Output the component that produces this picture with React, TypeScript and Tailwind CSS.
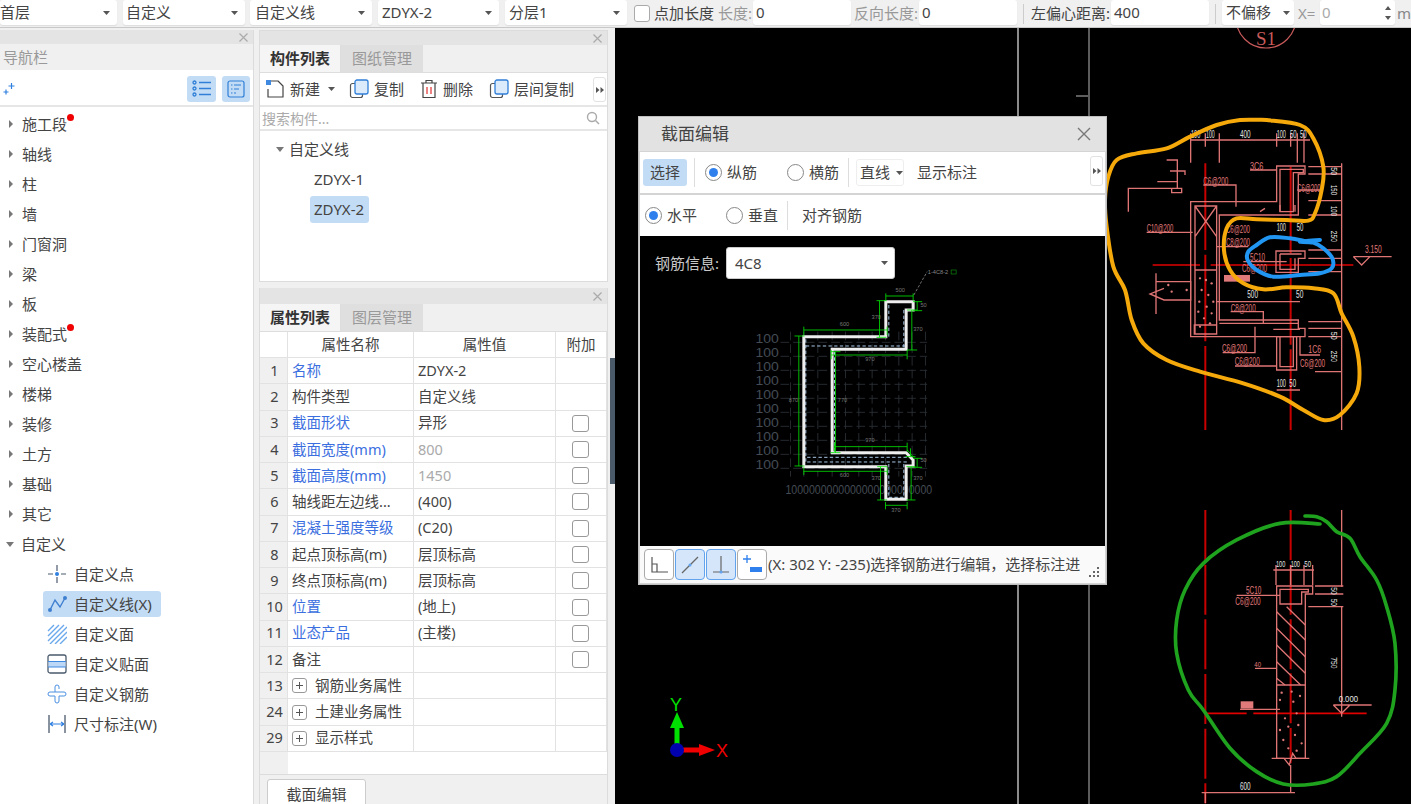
import type { ReactNode } from "react";

// smooth path through hand-traced points, for the marker scribbles
function smooth(pts: number[][]) {
  let d = `M${pts[0][0]} ${pts[0][1]}`;
  for (let i = 0; i < pts.length - 1; i++) {
    const p0 = pts[Math.max(i - 1, 0)];
    const p1 = pts[i];
    const p2 = pts[i + 1];
    const p3 = pts[Math.min(i + 2, pts.length - 1)];
    d += ` C${p1[0] + (p2[0] - p0[0]) / 6} ${p1[1] + (p2[1] - p0[1]) / 6} ${p2[0] - (p3[0] - p1[0]) / 6} ${p2[1] - (p3[1] - p1[1]) / 6} ${p2[0]} ${p2[1]}`;
  }
  return d;
}

const orange = [[500,30],[600,45],[640,85],[670,170],[665,240],[645,310],[625,332],[560,330],[470,328],[410,325],[380,355],[372,420],[390,480],[430,520],[490,538],[560,532],[640,535],[700,550],[725,610],[760,680],[778,770],[770,850],[720,915],[670,930],[610,900],[540,860],[430,820],[300,785],[200,750],[130,700],[95,630],[75,540],[40,470],[20,350],[15,270],[25,200],[50,150],[110,130],[200,115],[270,80],[350,45],[420,30],[500,30]];
const blue = [[660,390],[600,395],[640,398],[670,415],[697,445],[695,475],[660,490],[600,495],[520,500],[470,480],[443,450],[445,425],[470,405],[510,382],[570,385],[610,392]];
const green = [[435,18],[470,20],[500,35],[530,65],[570,85],[600,140],[650,210],[680,290],[705,400],[705,540],[680,640],[600,730],[530,800],[460,822],[370,822],[290,785],[210,715],[130,600],[85,540],[50,430],[50,330],[75,240],[130,160],[230,90],[360,40],[480,42]];

const dots = [[300,505],[318,510],[335,520],[305,540],[325,555],[298,575],[320,590],[340,575],[295,605],[312,625],[335,610],[330,640],[300,650],[205,525],[215,545],[260,540]];
const dots2 = [[365,548],[395,545],[420,558],[360,570],[400,575],[375,625],[410,610],[385,650],[360,660],[415,645],[405,675],[370,690],[425,700],[385,715],[410,722]];

// narrow CAD lettering: fixed width, tall glyphs
function T({ x, y, w, s = 32, c, rot, children }: { x: number; y: number; w: number; s?: number; c?: string; rot?: boolean; children: string }) {
  return (
    <text
      x={x}
      y={y}
      fontSize={s}
      fill={c ?? "#e07a7a"}
      textLength={w}
      lengthAdjust="spacingAndGlyphs"
      transform={rot ? `rotate(90 ${x} ${y})` : undefined}
    >
      {children}
    </text>
  );
}

function Cad() {
  return (
    <svg className="absolute inset-0 w-full h-full" viewBox="615 28 796 776" fontFamily="'Liberation Sans', sans-serif">
      <path d="M1018 28V804" stroke="#e8e8e8" strokeWidth="1.2" />
      <path d="M1089 28V804" stroke="#9a9a9a" strokeWidth="1.2" />
      <path d="M1076 96H1088" stroke="#bbb" />
      <circle cx="1266" cy="18" r="30" fill="none" stroke="#c85a5a" strokeWidth="1.2" />
      <text x="1266" y="45" fill="#c85a5a" fontSize="19" textAnchor="middle" fontFamily="'Liberation Serif', serif">S1</text>

      {/* upper section */}
      <g transform="translate(1100 110) scale(0.3333)" fill="none">
        <path d="M316 160V960M572 170V960" stroke="#c80000" strokeWidth="6" strokeDasharray="260 14" />
        <path d="M158 465H300M332 465H760" stroke="#e00000" strokeWidth="4" />
        <g stroke="#de7474" strokeWidth="4">
          <path d="M725 160V960M270 90H630M272 70V158M316 70V110M358 70V158M530 70V110M572 70V110M592 70V158M612 70V158" />
          <path d="M530 168H615V192H595V315H358V630H595V655H615V680H272V275H530Z" />
          <path d="M285 288H350V672H285ZM285 480H350M285 288L350 380M350 288L285 380M540 178H610V188H580V305H540ZM283 645H350V672H283Z" />
          <path d="M530 680H590V780H530ZM540 680V770H580V680M520 658H600M358 640H595" />
          <path d="M528 423H615V445H595V487H528ZM540 432H605M540 432V478H585V445M430 455H560" />
          <path d="M200 150H232V235H245V248H215V235H232M172 215H232M210 183H255V195M85 305V235H215M480 305L495 295M540 285V305M585 285V305" />
          <path d="M310 225H408V290M140 367H278M168 490V612M168 515H272V570H192L150 552L192 535M350 410H445M350 575H600M392 605H490V640M465 650V728H368M405 768H530M450 180H530M645 785H725M625 170H725M625 192H725M625 272H725M625 315H725M625 420H725M625 445H725M625 485H725M625 635H725M625 655H725M625 680H725M530 840H600M600 680V735H660M592 240H660" />
          <path d="M760 440H875M760 440L785 465L810 440" />
        </g>
        <T x={450} y={181} w={40}>3C6</T>
        <T x={310} y={224} w={75}>C6@200</T>
        <T x={592} y={245} w={70}>C6@200</T>
        <T x={140} y={365} w={80}>C10@200</T>
        <T x={378} y={368} w={72}>C6@200</T>
        <T x={378} y={407} w={72}>C8@200</T>
        <T x={450} y={452} w={45}>5C10</T>
        <T x={426} y={486} w={75}>C6@200</T>
        <T x={392} y={606} w={75}>C8@200</T>
        <T x={366} y={726} w={75}>C6@200</T>
        <T x={404} y={764} w={75}>C6@200</T>
        <T x={625} y={730} w={38}>1C6</T>
        <T x={600} y={770} w={75}>C6@200</T>
        <T x={795} y={430} w={50}>3.150</T>
        <T x={273} y={84} w={28} c="#e4e4e4">100</T>
        <T x={318} y={84} w={26} c="#e4e4e4">100</T>
        <T x={420} y={84} w={32} c="#e4e4e4">400</T>
        <T x={530} y={84} w={28} c="#e4e4e4">100</T>
        <T x={570} y={84} w={20} c="#e4e4e4">50</T>
        <T x={600} y={84} w={20} c="#e4e4e4">50</T>
        <T x={530} y={364} w={28} c="#e4e4e4">100</T>
        <T x={590} y={364} w={20} c="#e4e4e4">50</T>
        <T x={442} y={564} w={32} c="#e4e4e4">500</T>
        <T x={588} y={564} w={22} c="#e4e4e4">50</T>
        <T x={530} y={832} w={28} c="#e4e4e4">100</T>
        <T x={568} y={832} w={20} c="#e4e4e4">50</T>
        <T x={694} y={172} w={24} s={28} c="#e4e4e4" rot>50</T>
        <T x={694} y={225} w={30} s={28} c="#e4e4e4" rot>150</T>
        <T x={694} y={288} w={30} s={28} c="#e4e4e4" rot>100</T>
        <T x={694} y={362} w={34} s={28} c="#e4e4e4" rot>250</T>
        <T x={694} y={665} w={24} s={28} c="#e4e4e4" rot>50</T>
        <T x={694} y={722} w={34} s={28} c="#e4e4e4" rot>250</T>
        <rect x="372" y="495" width="78" height="20" fill="#e07a7a" />
        {dots.map(([x, y]) => <circle key={`${x}-${y}`} cx={x} cy={y} r="3.5" fill="#e07a7a" />)}
      </g>

      {/* lower section */}
      <g transform="translate(1160 510) scale(0.3333)" fill="none">
        <path d="M136 0V880M392 0V480M392 490V760" stroke="#c80000" strokeWidth="6" strokeDasharray="150 14" />
        <path d="M136 610H260M280 610H620" stroke="#e00000" strokeWidth="5" />
        <g stroke="#de7474" strokeWidth="4">
          <path d="M545 0V230M545 290V620M340 180H462M348 165V225M392 165V225M432 165V225M458 165V225M136 848V880" />
          <path d="M350 228H458V252H436V745H350ZM360 238H445V246H425V282H360ZM350 525H436" />
          <path d="M350 305L436 390M380 290L436 345M350 355L436 440M350 405L436 490M350 455L422 525M350 505L375 525" />
          <path d="M465 228H550M465 252H550M445 290H550M230 256H360M285 475H350M240 598H360M520 585H635M520 585L545 610L570 585" />
          <path d="M335 745H372L388 765L398 730L408 745H448M392 765V850M125 848H405" />
        </g>
        <T x={258} y={252} w={46}>5C10</T>
        <T x={226} y={286} w={76}>C6@200</T>
        <T x={283} y={472} w={20} s={24}>40</T>
        <rect x="242" y="574" width="38" height="22" fill="#e07a7a" />
        <T x={536} y={576} w={58} s={28} c="#e4e4e4">0.000</T>
        <T x={348} y={172} w={28} s={28} c="#e4e4e4">100</T>
        <T x={392} y={172} w={28} s={28} c="#e4e4e4">100</T>
        <T x={433} y={172} w={20} s={28} c="#e4e4e4">50</T>
        <T x={240} y={840} w={32} c="#e4e4e4">600</T>
        <T x={513} y={232} w={22} s={26} c="#e4e4e4" rot>50</T>
        <T x={513} y={266} w={22} s={26} c="#e4e4e4" rot>50</T>
        <T x={513} y={442} w={34} s={26} c="#e4e4e4" rot>750</T>
        {dots2.map(([x, y]) => <circle key={`${x}-${y}`} cx={x} cy={y} r="3.5" fill="#e07a7a" />)}
      </g>

      {/* marker scribbles */}
      <g transform="translate(1100 110) scale(0.3333)" fill="none" strokeLinecap="round" strokeLinejoin="round">
        <path d={smooth(orange)} stroke="#f5a90a" strokeWidth="12" />
        <path d={smooth(blue)} stroke="#2196f3" strokeWidth="12" />
      </g>
      <g transform="translate(1160 510) scale(0.3333)" fill="none" strokeLinecap="round" strokeLinejoin="round">
        <path d={smooth(green)} stroke="#1fa31f" strokeWidth="11" />
      </g>

      {/* axis marker */}
      <path d="M677 749V722" stroke="#00e000" strokeWidth="5" />
      <path d="M677 712L684 728H670Z" fill="#00e000" />
      <path d="M677 750H702" stroke="#f00000" strokeWidth="5" />
      <path d="M715 750L699 744V756Z" fill="#f00000" />
      <circle cx="677" cy="750" r="7" fill="#0000b0" />
      <text x="676" y="711" fill="#00e000" fontSize="18" textAnchor="middle">Y</text>
      <text x="722" y="757" fill="#f00000" fontSize="18" textAnchor="middle">X</text>
    </svg>
  );
}

function SectionDrawing() {
  const labels = [235, 277, 319, 361, 403, 445, 487, 529, 571, 613];
  const verts = [150, 190, 232, 275, 315, 355, 395, 435, 475, 515, 555];
  return (
    <svg className="w-full h-full" viewBox="640 236 464 310" fontFamily="'Liberation Sans', sans-serif">
      <g transform="translate(740 260) scale(0.3333)" fill="none">
        <g stroke="#2c3238" strokeWidth="2.5" strokeDasharray="26 12">
          {labels.map((y) => <path key={y} d={`M120 ${y + 12}H560`} />)}
          {verts.map((x) => <path key={x} d={`M${x} 215V650`} />)}
        </g>
        <g fill="#434b54" fontSize="36">
          {labels.map((y) => <text key={y} x="45" y={y + 14} textLength="70" lengthAdjust="spacingAndGlyphs">100</text>)}
          <text x="135" y="702" textLength="440" lengthAdjust="spacingAndGlyphs">1000000000000000000000000</text>
        </g>
        <path d="M196 258H495M445 135V232M490 150V262M196 238V610M282 275V578M200 592H515M200 606H500M445 612V712M490 612V712M445 712H490" stroke="#a8c8e8" strokeWidth="3" strokeDasharray="10 7" />
        <path d="M190 230H436V125H518V150H497V268H275V578H497L518 600V618H497V718H436V620H190Z" stroke="#eeeeee" strokeWidth="9" strokeLinejoin="miter" />
        <path d="M520 105L560 35" stroke="#888" strokeWidth="2.5" strokeDasharray="8 5" />
        <text x="562" y="42" fill="#888" fontSize="17">1-4C8-2</text>
        <rect x="632" y="30" width="15" height="12" fill="none" stroke="#0c8a0c" strokeWidth="2" />
        <g stroke="#00e000" strokeWidth="2.5">
          <path d="M190 210H440M190 200V225M440 200V225" />
          <path d="M175 228V618M162 228H192M162 618H192" />
          <path d="M436 108H518M436 100V122M518 100V122" />
          <path d="M417 122V232M408 122H438M408 232H438" />
          <path d="M514 150V270M500 150H530M500 270H530" />
          <path d="M530 125V152M518 125H545M518 152H545" />
          <path d="M272 285H500M272 270V298M500 270V298" />
          <path d="M285 275V578M270 275H300M270 578H300" />
          <path d="M282 560H500M282 548V575M500 548V575" />
          <path d="M190 634H440M190 622V645M440 622V645" />
          <path d="M420 620V720M410 620H440M410 720H440" />
          <path d="M512 620V720M498 620H525M498 720H525" />
          <path d="M435 736H500M435 726V748M500 726V748" />
          <path d="M530 595V622M518 595H545M518 622H545" />
          <path d="M500 570L520 592M510 565V590M495 590H525" />
        </g>
        <g fill="#777" fontSize="17">
          <text x="465" y="97">500</text>
          <text x="298" y="197">600</text>
          <text x="393" y="178">370</text>
          <text x="518" y="212">370</text>
          <text x="540" y="140">50</text>
          <text x="374" y="302">970</text>
          <text x="292" y="426">770</text>
          <text x="145" y="426">870</text>
          <text x="374" y="546">970</text>
          <text x="298" y="650">600</text>
          <text x="393" y="660">370</text>
          <text x="518" y="660">370</text>
          <text x="452" y="756">370</text>
          <text x="540" y="606">50</text>
        </g>
      </g>
    </svg>
  );
}

function Caret() {
  return (
    <svg width="7" height="4" viewBox="0 0 7 4" className="shrink-0">
      <path d="M0 0H7L3.5 4Z" fill="#555" />
    </svg>
  );
}

function Arrow({ open }: { open?: boolean }) {
  return (
    <svg width="8" height="10" viewBox="0 0 8 10" className="shrink-0">
      {open ? <path d="M0 3H8L4 8Z" fill="#777" /> : <path d="M2 1L6 5L2 9Z" fill="#777" />}
    </svg>
  );
}

function More() {
  return (
    <svg width="8" height="6" viewBox="0 0 8 6">
      <path d="M0 0L3.5 3L0 6ZM4.5 0L8 3L4.5 6Z" fill="#555" />
    </svg>
  );
}

function TopSelect({ label, width }: { label: string; width: string }) {
  return (
    <div className={`${width} h-[25px] -mt-[2px] bg-white rounded-[3px] shadow-[0_1px_1px_#ddd] flex items-center justify-between pr-[7px] shrink-0`}>
      <span>{label}</span>
      <Caret />
    </div>
  );
}

function TopInput({ value, muted }: { value: string; muted?: boolean }) {
  return (
    <div className={`w-[98px] h-[25px] -mt-[2px] bg-white rounded-[3px] shadow-[0_1px_1px_#ddd] flex items-center px-[3px] shrink-0 ${muted ? "text-[#aaa]" : ""}`}>
      {value}
    </div>
  );
}

function TopBar() {
  return (
    <div className="h-[28px] bg-[#f0f0f0] border-b border-[#c8c8c8] flex items-center text-[15px] text-[#444] whitespace-nowrap shrink-0">
      <TopSelect label="首层" width="w-[117px]" />
      <div className="w-[6px] shrink-0" />
      <TopSelect label="自定义" width="w-[122px] pl-[3px]" />
      <div className="w-[5px] shrink-0" />
      <TopSelect label="自定义线" width="w-[122px] pl-[5px]" />
      <div className="w-[6px] shrink-0" />
      <TopSelect label="ZDYX-2" width="w-[121px] pl-[4px]" />
      <div className="w-[6px] shrink-0" />
      <TopSelect label="分层1" width="w-[122px] pl-[4px]" />
      <div className="w-[7px] shrink-0" />
      <div className="w-[16px] h-[17px] bg-white border border-[#aaa] rounded-[3px] shrink-0" />
      <span className="ml-[4px] w-[61px]">点加长度</span>
      <span className="ml-[3px] text-[#999] w-[35px]">长度:</span>
      <TopInput value="0" />
      <span className="ml-[3px] text-[#999] w-[65px]">反向长度:</span>
      <TopInput value="0" />
      <div className="w-px h-[20px] bg-[#ccc] ml-[6px] shrink-0" />
      <span className="ml-[7px] w-[80px]">左偏心距离:</span>
      <TopInput value="400" />
      <div className="w-px h-[20px] bg-[#ccc] ml-[6px] shrink-0" />
      <div className="ml-[6px] w-[72px] h-[25px] -mt-[2px] bg-white rounded-[3px] shadow-[0_1px_1px_#ddd] flex items-center justify-between px-[4px] shrink-0">
        <span>不偏移</span>
        <Caret />
      </div>
      <span className="ml-[4px] text-[#999] w-[22px]">X=</span>
      <div className="w-[75px] h-[25px] -mt-[2px] bg-white rounded-[3px] shadow-[0_1px_1px_#ddd] flex items-center justify-between pl-[2px] pr-[4px] text-[#aaa] shrink-0">
        <span>0</span>
        <svg width="6" height="16" viewBox="0 0 6 16"><path d="M3 1L6 5H0ZM3 15L0 11H6Z" fill="#555" /></svg>
      </div>
      <span className="ml-[2px] text-[#888]">m</span>
    </div>
  );
}

function PanelClose({ tall }: { tall?: boolean }) {
  return (
    <div className={`${tall ? "h-[16px]" : "h-[14px]"} bg-[#e4e4e4] flex items-center justify-end pr-[5px] shrink-0`}>
      <svg width="9" height="9" viewBox="0 0 9 9"><path d="M0.5 0.5L8.5 8.5M8.5 0.5L0.5 8.5" stroke="#aaa" strokeWidth="1.2" /></svg>
    </div>
  );
}

const navItems = ["施工段", "轴线", "柱", "墙", "门窗洞", "梁", "板", "装配式", "空心楼盖", "楼梯", "装修", "土方", "基础", "其它"];
const dotted = ["施工段", "装配式"];

const customIcons: Record<string, ReactNode> = {
  point: (
    <g fill="none">
      <path d="M10 1V7M10 13V19M1 10H6M14 10H19" stroke="#4b5a6e" strokeWidth="1.2" />
      <circle cx="10" cy="10" r="2" fill="#2f80e0" />
    </g>
  ),
  line: (
    <g fill="none">
      <path d="M3 16L8 6L13 13L18 4" stroke="#3f7fd0" strokeWidth="1.4" />
      <circle cx="3" cy="16" r="2" fill="#3f7fd0" />
      <circle cx="18" cy="4" r="2" fill="#3f7fd0" />
    </g>
  ),
  face: <path d="M1 7L7 1M1 12L12 1M1 17L17 1M3 20L20 3M8 20L20 8M13 20L20 13" stroke="#6aa8ec" strokeWidth="1.4" fill="none" />,
  stick: (
    <g fill="none">
      <rect x="1" y="1" width="18" height="18" rx="2" stroke="#4b5a6e" strokeWidth="1.3" />
      <rect x="1.5" y="8" width="17" height="5" fill="#bcd8f6" />
      <path d="M1 7.5H19M1 13H19" stroke="#3f8ae0" strokeWidth="1.1" />
    </g>
  ),
  rebar: <path d="M8 8V3A2 2 0 0 1 12 3V5M8 8H3A2 2 0 0 0 3 12H8V17A2 2 0 0 0 12 17V12H17A2 2 0 0 0 17 8H8" stroke="#4a90e2" strokeWidth="1" fill="none" />,
  dim: (
    <g fill="none">
      <path d="M2 1V19M18 1V19" stroke="#4b5a6e" strokeWidth="1.3" />
      <path d="M3 10H17M3 10L6 8M3 10L6 12M17 10L14 8M17 10L14 12" stroke="#2f80e0" strokeWidth="1.2" />
    </g>
  ),
};

const customs = [
  { label: "自定义点", icon: "point" },
  { label: "自定义线(X)", icon: "line", active: true },
  { label: "自定义面", icon: "face" },
  { label: "自定义贴面", icon: "stick" },
  { label: "自定义钢筋", icon: "rebar" },
  { label: "尺寸标注(W)", icon: "dim" },
];

function NavPanel() {
  return (
    <div className="w-[254px] shrink-0 flex flex-col bg-white border-r border-[#dcdcdc] mt-[2px]">
      <PanelClose />
      <div className="h-[26px] bg-[#f0f0f0] flex items-center pl-[3px] text-[15px] text-[#999] shrink-0">导航栏</div>
      <div className="h-[35px] mt-[2px] border-b-2 border-[#e6e6e6] flex items-center justify-between pl-[3px] pr-[3px] shrink-0">
        <svg width="12" height="13" viewBox="0 0 12 13"><path d="M8.5 1V7M5.5 4H11.5M3 7.5V12.5M0.5 10H5.5" stroke="#2f80e0" strokeWidth="1.2" /></svg>
        <div className="flex gap-[6px]">
          <div className="w-[29px] h-[26px] bg-[#c3dcf5] rounded-[3px] flex items-center justify-center">
            <svg width="20" height="17" viewBox="0 0 20 17" fill="none" stroke="#2f7fd8" strokeWidth="1.3"><circle cx="2.5" cy="2.5" r="1.5" /><circle cx="2.5" cy="8.5" r="1.5" /><circle cx="2.5" cy="14.5" r="1.5" /><path d="M7 2.5H19M7 8.5H19M7 14.5H19" /></svg>
          </div>
          <div className="w-[28px] h-[26px] bg-[#c3dcf5] rounded-[3px] flex items-center justify-center">
            <svg width="18" height="18" viewBox="0 0 18 18" fill="none" stroke="#2f7fd8" strokeWidth="1.2"><rect x="1" y="1" width="16" height="16" rx="2" /><path d="M4 5H5.5M7 5H14M4 9H5.5M7 9H12M4 13H5.5M7 13H9" /></svg>
          </div>
        </div>
      </div>
      <div className="pt-[2px] text-[15px] text-[#444]">
        {navItems.map((n) => (
          <div key={n} className="h-[30px] flex items-center pl-[7px] gap-[7px]">
            <Arrow />
            <span className="relative">
              {n}
              {dotted.includes(n) && <span className="absolute -right-[7px] top-[1px] w-[7px] h-[7px] rounded-full bg-[#f00000]" />}
            </span>
          </div>
        ))}
        <div className="h-[30px] flex items-center pl-[6px] gap-[7px]">
          <Arrow open />
          <span>自定义</span>
        </div>
        {customs.map((c) => (
          <div key={c.label} className="h-[30px] flex items-center pl-[43px]">
            <div className={`flex items-center h-[26px] pl-[4px] pr-[9px] gap-[7px] rounded-[3px] ${c.active ? "bg-[#c3dcf5]" : ""}`}>
              <svg width="20" height="20" viewBox="0 0 20 20" className="shrink-0">{customIcons[c.icon]}</svg>
              <span>{c.label}</span>
            </div>
          </div>
        ))}
      </div>
    </div>
  );
}

function Tabs({ active, other }: { active: string; other: string }) {
  return (
    <div className="h-[28px] bg-[#f0f0f0] flex text-[15px] border-b border-[#ddd] shrink-0">
      <div className="w-[81px] flex items-center justify-center font-bold text-[#333] bg-[#f5f5f5] border-r border-[#ddd]">{active}</div>
      <div className="w-[82px] flex items-center justify-center text-[#999] bg-[#dfdfdf]">{other}</div>
    </div>
  );
}

function Tool({ icon, label, className }: { icon: ReactNode; label: string; className?: string }) {
  return (
    <div className={`flex items-center gap-[5px] ${className ?? ""}`}>
      {icon}
      <span>{label}</span>
    </div>
  );
}

const copyIcon = (
  <svg width="20" height="20" viewBox="0 0 20 20" fill="none">
    <rect x="1.5" y="4.5" width="12" height="14" rx="2" stroke="#555" strokeWidth="1.2" />
    <rect x="6" y="1" width="13" height="14" rx="2" fill="#dcebfb" stroke="#2f7fd8" strokeWidth="1.3" />
  </svg>
);

function ListPanel() {
  return (
    <div className="h-[252px] flex flex-col bg-white border border-[#dcdcdc] shrink-0">
      <PanelClose />
      <Tabs active="构件列表" other="图纸管理" />
      <div className="h-[34px] flex items-center text-[15px] text-[#444] border-b-2 border-[#e6e6e6] pl-[5px] shrink-0 relative whitespace-nowrap">
        <Tool
          label="新建"
          icon={
            <svg width="20" height="20" viewBox="0 0 20 20" fill="none">
              <path d="M5 2H13L18 7V18H3V10" stroke="#444" strokeWidth="1.2" strokeLinejoin="round" />
              <rect x="1" y="1" width="5" height="5" fill="#3f8ae0" />
            </svg>
          }
        />
        <span className="ml-[8px]"><Caret /></span>
        <Tool className="ml-[14px]" label="复制" icon={copyIcon} />
        <Tool
          className="ml-[16px]"
          label="删除"
          icon={
            <svg width="18" height="20" viewBox="0 0 18 20" fill="none" stroke="#444" strokeWidth="1.2">
              <path d="M1 4H17M6 4V1.5H12V4M3 4V18.5H15V4" />
              <path d="M7 8V15M11 8V15" stroke="#e03030" />
            </svg>
          }
        />
        <Tool className="ml-[16px]" label="层间复制" icon={copyIcon} />
        <div className="absolute right-[1px] top-[4px] w-[13px] h-[25px] bg-white border border-[#e2e2e2] rounded-[3px] flex items-center justify-center">
          <More />
        </div>
      </div>
      <div className="h-[24px] flex items-center justify-between pl-[2px] pr-[7px] text-[14px] text-[#aaa] border-b-2 border-[#e6e6e6] shrink-0">
        <span>搜索构件...</span>
        <svg width="14" height="14" viewBox="0 0 14 14" fill="none" stroke="#aaa" strokeWidth="1.4"><circle cx="6" cy="6" r="4.5" /><path d="M9.5 9.5L13 13" /></svg>
      </div>
      <div className="text-[15px] text-[#444] pt-[3px]">
        <div className="h-[30px] flex items-center pl-[16px] gap-[5px]">
          <Arrow open />
          <span>自定义线</span>
        </div>
        <div className="h-[30px] flex items-center pl-[54px]">ZDYX-1</div>
        <div className="h-[30px] flex items-center pl-[50px]">
          <span className="bg-[#c3dcf5] rounded-[3px] pl-[4px] pr-[5px] h-[27px] flex items-center">ZDYX-2</span>
        </div>
      </div>
    </div>
  );
}

type Row = { no: number; name: string; value?: string; blue?: boolean; gray?: boolean; check?: boolean; group?: boolean };

const rows: Row[] = [
  { no: 1, name: "名称", value: "ZDYX-2", blue: true },
  { no: 2, name: "构件类型", value: "自定义线" },
  { no: 3, name: "截面形状", value: "异形", blue: true, check: true },
  { no: 4, name: "截面宽度(mm)", value: "800", blue: true, gray: true, check: true },
  { no: 5, name: "截面高度(mm)", value: "1450", blue: true, gray: true, check: true },
  { no: 6, name: "轴线距左边线...", value: "(400)", check: true },
  { no: 7, name: "混凝土强度等级", value: "(C20)", blue: true, check: true },
  { no: 8, name: "起点顶标高(m)", value: "层顶标高", check: true },
  { no: 9, name: "终点顶标高(m)", value: "层顶标高", check: true },
  { no: 10, name: "位置", value: "(地上)", blue: true, check: true },
  { no: 11, name: "业态产品", value: "(主楼)", blue: true, check: true },
  { no: 12, name: "备注", check: true },
  { no: 13, name: "钢筋业务属性", group: true },
  { no: 24, name: "土建业务属性", group: true },
  { no: 29, name: "显示样式", group: true },
];

function PropRow({ row }: { row: Row }) {
  return (
    <div className="h-[26.27px] flex border-b border-[#e2e2e2]">
      <div className="w-[28px] shrink-0 bg-[#f0f0f0] border-r border-[#e2e2e2] flex items-center justify-center pl-[2px]">{row.no}</div>
      <div className={`w-[126px] shrink-0 border-r border-[#e2e2e2] flex items-center pl-[4px] whitespace-nowrap ${row.blue ? "text-[#3b6fe0]" : ""}`}>
        {row.group && (
          <span className="w-[15px] h-[15px] border border-[#999] rounded-[3px] flex items-center justify-center mr-[8px] shrink-0">
            <svg width="7" height="7" viewBox="0 0 7 7"><path d="M3.5 0V7M0 3.5H7" stroke="#555" /></svg>
          </span>
        )}
        {row.name}
      </div>
      <div className={`w-[142px] shrink-0 border-r border-[#e2e2e2] flex items-center pl-[4px] ${row.gray ? "text-[#aaa]" : ""}`}>{row.value}</div>
      <div className="flex-1 border-r border-[#e2e2e2] flex items-center justify-center pr-[1px]">
        {row.check && <span className="w-[17px] h-[17px] bg-white border border-[#999] rounded-[3px]" />}
      </div>
    </div>
  );
}

function PropPanel() {
  return (
    <div className="flex-1 flex flex-col bg-white border-x border-[#dcdcdc] mt-[6px] min-h-0">
      <PanelClose tall />
      <Tabs active="属性列表" other="图层管理" />
      <div className="h-[26px] flex border-b border-[#e2e2e2] text-[14.5px] text-[#444] shrink-0">
        <div className="w-[28px] border-r border-[#e2e2e2]" />
        <div className="w-[126px] border-r border-[#e2e2e2] flex items-center justify-center">属性名称</div>
        <div className="w-[142px] border-r border-[#e2e2e2] flex items-center justify-center">属性值</div>
        <div className="flex-1 border-r border-[#e2e2e2] flex items-center justify-center">附加</div>
      </div>
      <div className="text-[14.5px] text-[#444]">
        {rows.map((r) => <PropRow key={r.no} row={r} />)}
      </div>
      <div className="h-[23px] border-b border-[#dcdcdc] shrink-0">
        <div className="w-[28px] h-full bg-[#f0f0f0]" />
      </div>
      <div className="flex-1 bg-[#f0f0f0] pl-[7px] pt-[4px] overflow-hidden">
        <div className="w-[99px] h-[30px] bg-white border border-[#ccc] rounded-[3px] flex items-center justify-center text-[15px] text-[#444]">截面编辑</div>
      </div>
    </div>
  );
}

function Radio({ on, label, className }: { on?: boolean; label: string; className?: string }) {
  return (
    <div className={`flex items-center gap-[5px] ${className ?? ""}`}>
      <span className="w-[17px] h-[17px] rounded-full border border-[#888] bg-white flex items-center justify-center shrink-0">
        {on && <span className="w-[9px] h-[9px] rounded-full bg-[#2f80ed]" />}
      </span>
      <span>{label}</span>
    </div>
  );
}

function SnapButton({ active, children }: { active?: boolean; children: ReactNode }) {
  return (
    <div className={`w-[30px] h-[31px] rounded-[4px] border flex items-center justify-center shrink-0 ${active ? "bg-[#d5e6fa] border-[#62a3ee]" : "bg-white border-[#aaa]"}`}>
      <svg width="22" height="22" viewBox="0 0 22 22" fill="none">{children}</svg>
    </div>
  );
}

function SectionDialog() {
  return (
    <div className="absolute left-[23px] top-[88px] w-[469px] h-[469px] bg-[#d4d4d4] border border-[#c0c0c0] flex flex-col text-[15px] text-[#444] whitespace-nowrap">
      <div className="h-[34px] bg-[#e2e2e2] flex items-center justify-between pl-[22px] pr-[15px] shrink-0 text-[17px]">
        <span>截面编辑</span>
        <svg width="14" height="14" viewBox="0 0 14 14"><path d="M1 1L13 13M13 1L1 13" stroke="#777" strokeWidth="1.4" /></svg>
      </div>
      <div className="h-[41px] mx-[1px] mt-px bg-white flex items-center relative shrink-0">
        <div className="ml-[3px] w-[44px] h-[27px] bg-[#c3dcf5] rounded-[3px] flex items-center justify-center">选择</div>
        <div className="w-px h-[29px] bg-[#ddd] ml-[7px]" />
        <Radio on label="纵筋" className="ml-[10px]" />
        <Radio label="横筋" className="ml-[30px]" />
        <div className="w-px h-[29px] bg-[#ddd] ml-[9px]" />
        <div className="ml-[7px] h-[27px] w-[48px] border border-[#eee] rounded-[3px] flex items-center gap-[6px] pl-[3px]">
          <span>直线</span>
          <Caret />
        </div>
        <span className="ml-[13px]">显示标注</span>
        <div className="absolute right-[2px] top-[4px] w-[13px] h-[30px] bg-white border border-[#e2e2e2] rounded-[3px] flex items-center justify-center">
          <More />
        </div>
      </div>
      <div className="h-[41px] mx-[1px] mt-[2px] bg-white flex items-center shrink-0">
        <Radio on label="水平" className="ml-[5px]" />
        <Radio label="垂直" className="ml-[29px]" />
        <div className="w-px h-[29px] bg-[#ddd] ml-[9px]" />
        <span className="ml-[14px]">对齐钢筋</span>
      </div>
      <div className="flex-1 mx-[1px] bg-black relative min-h-0">
        <SectionDrawing />
        <div className="absolute left-[15px] top-[11px] flex items-center text-[#c8c8c8]">
          <span className="w-[71px]">钢筋信息:</span>
          <div className="w-[169px] h-[32px] bg-white border border-[#ccc] rounded-[3px] flex items-center justify-between pl-[8px] pr-[6px] text-[#444]">
            <span>4C8</span>
            <Caret />
          </div>
        </div>
      </div>
      <div className="h-[37px] mx-[1px] mb-[1px] bg-[#fafafa] flex items-center pl-[4px] relative shrink-0">
        <SnapButton>
          <path d="M4 3V18H20M4 10H9V18" stroke="#555" strokeWidth="1.2" />
        </SnapButton>
        <div className="w-px" />
        <SnapButton active>
          <path d="M3 19L19 3" stroke="#666" strokeWidth="1.2" />
          <circle cx="11" cy="11" r="1.5" fill="#62a3ee" />
        </SnapButton>
        <div className="w-px" />
        <SnapButton active>
          <path d="M11 2V18M3 18H19" stroke="#666" strokeWidth="1.2" />
          <circle cx="11" cy="18" r="1.6" fill="#62a3ee" />
        </SnapButton>
        <div className="w-px" />
        <SnapButton>
          <path d="M6 1V9M2 5H10" stroke="#2f80ed" strokeWidth="1.3" />
          <rect x="9" y="13" width="12" height="5" fill="#2f80ed" />
        </SnapButton>
        <span className="ml-px w-[312px] overflow-hidden">(X: 302 Y: -235)选择钢筋进行编辑，选择标注进</span>
        <svg width="11" height="11" viewBox="0 0 11 11" className="absolute right-[5px] bottom-[5px]">
          <path d="M8 0H10V2H8ZM4 4H6V6H4ZM8 4H10V6H8ZM0 8H2V10H0ZM4 8H6V10H4ZM8 8H10V10H8Z" fill="#666" />
        </svg>
      </div>
    </div>
  );
}

export default function App() {
  return (
    <div className="w-[1411px] h-[804px] overflow-hidden flex flex-col bg-[#f0f0f0] font-['Noto_Sans','Noto_Sans_CJK_SC','Liberation_Sans',sans-serif]">
      <TopBar />
      <div className="flex-1 flex min-h-0">
        <NavPanel />
        <div className="w-[349px] ml-[5px] shrink-0 flex flex-col mt-[2px] min-h-0">
          <ListPanel />
          <PropPanel />
        </div>
        <div className="w-[7px] flex items-start shrink-0 pt-[330px]">
          <div className="ml-[2px] w-[5px] h-[126px] bg-[#4a5a68]" />
        </div>
        <div className="flex-1 bg-black relative min-w-0">
          <Cad />
          <SectionDialog />
        </div>
      </div>
    </div>
  );
}
